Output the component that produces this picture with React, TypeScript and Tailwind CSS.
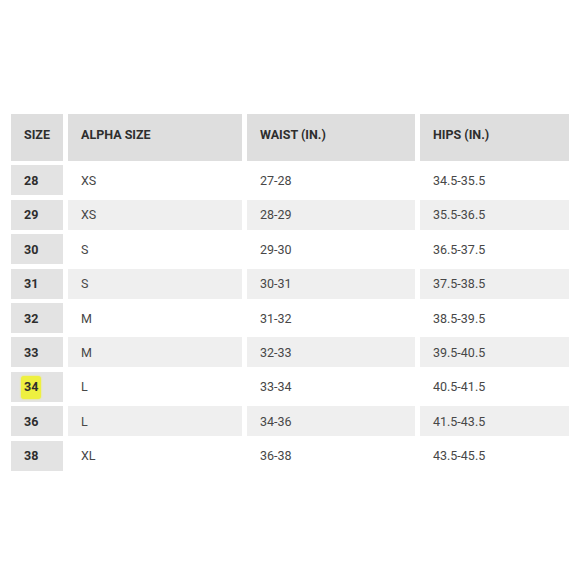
const rows = [
  ['28', 'XS', '27-28', '34.5-35.5'],
  ['29', 'XS', '28-29', '35.5-36.5'],
  ['30', 'S', '29-30', '36.5-37.5'],
  ['31', 'S', '30-31', '37.5-38.5'],
  ['32', 'M', '31-32', '38.5-39.5'],
  ['33', 'M', '32-33', '39.5-40.5'],
  ['34', 'L', '33-34', '40.5-41.5'],
  ['36', 'L', '34-36', '41.5-43.5'],
  ['38', 'XL', '36-38', '43.5-45.5'],
]

const headers = ['SIZE', 'ALPHA SIZE', 'WAIST (IN.)', 'HIPS (IN.)']

export default function App() {
  return (
    <div
      className="w-[580px] h-[580px] bg-white pt-[114px] pl-[11px]"
      style={{ fontFamily: 'Roboto, "Liberation Sans", sans-serif' }}
    >
      <div className="grid grid-cols-[52px_174px_168px_149px] gap-x-[5px] gap-y-[4.4px] text-[12.5px]">
        {headers.map((h) => (
          <div
            key={h}
            className="h-[47px] bg-[#dedede] pl-[13px] flex items-center pb-[4px] font-bold text-[#2e2e2e]"
          >
            {h}
          </div>
        ))}
        {rows.map((r, i) => {
          const alt = i % 2 === 1 ? 'bg-[#efefef]' : 'bg-white'
          return [
            <div
              key={r[0] + 'a'}
              className="h-[30px] bg-[#e3e3e3] pl-[13px] pt-[2px] flex items-center font-bold text-[#2e2e2e]"
            >
              {r[0] === '34' ? (
                <span className="bg-[#eef040] px-[3px] -ml-[3px] py-[2px] rounded-[3px] shadow-[0_0_2px_#eef040]">
                  34
                </span>
              ) : (
                r[0]
              )}
            </div>,
            ...r.slice(1).map((c, j) => (
              <div
                key={r[0] + j}
                className={`h-[30px] ${alt} pl-[13px] pt-[2px] flex items-center text-[#474747]`}
              >
                {c}
              </div>
            )),
          ]
        })}
      </div>
    </div>
  )
}
